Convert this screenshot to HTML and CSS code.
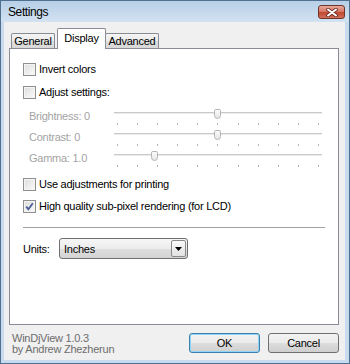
FILE: index.html
```html
<html>
  <head>
    <link rel="stylesheet" href="styles.css">
  </head>
  <body>
    <div class="window">
      <div class="titlebar">
        <span class="title">Settings</span>
        <button class="close-btn">
          <svg width="12" height="9" viewBox="0 0 12 9">
            <path d="M2 1.5 L10 7.5 M10 1.5 L2 7.5" stroke="#6b2a22" stroke-width="3.6" stroke-linecap="round"/>
            <path d="M2 1.5 L10 7.5 M10 1.5 L2 7.5" stroke="#fff" stroke-width="2" stroke-linecap="round"/>
          </svg>
        </button>
      </div>
      <div class="client">
        <div class="tabs">
          <div class="tab tab-general">General</div>
          <div class="tab tab-display active">Display</div>
          <div class="tab tab-advanced">Advanced</div>
        </div>
        <div class="panel">
          <div class="check"><span class="box"></span>Invert colors</div>
          <div class="check check-adjust"><span class="box"></span>Adjust settings:</div>

          <div class="slider-row first">
            <div class="slider-label">Brightness: 0</div>
            <div class="slider">
              <div class="track"></div>
              <div class="ticks"><i></i><i></i><i></i><i></i><i></i><i></i><i></i><i></i><i></i><i></i><i></i></div>
              <div class="thumb" style="left: 100px"></div>
            </div>
          </div>
          <div class="slider-row">
            <div class="slider-label">Contrast: 0</div>
            <div class="slider">
              <div class="track"></div>
              <div class="ticks"><i></i><i></i><i></i><i></i><i></i><i></i><i></i><i></i><i></i><i></i><i></i></div>
              <div class="thumb" style="left: 100px"></div>
            </div>
          </div>
          <div class="slider-row">
            <div class="slider-label">Gamma: 1.0</div>
            <div class="slider">
              <div class="track"></div>
              <div class="ticks"><i></i><i></i><i></i><i></i><i></i><i></i><i></i><i></i><i></i><i></i><i></i></div>
              <div class="thumb" style="left: 37px"></div>
            </div>
          </div>

          <div class="check check-print"><span class="box"></span>Use adjustments for printing</div>
          <div class="check check-lcd">
            <span class="box checked">
              <svg width="9" height="9" viewBox="0 0 9 9">
                <path d="M1.2 4.6 L3.4 7.2 L7.8 1.2" fill="none" stroke="#4b5d96" stroke-width="1.8"/>
              </svg>
            </span>High quality sub-pixel rendering (for LCD)
          </div>

          <div class="separator"></div>

          <div class="units-row">
            <span class="units-label">Units:</span>
            <div class="combo">
              <span>Inches</span>
              <span class="combo-arrow">
                <svg width="7" height="4" viewBox="0 0 7 4"><path d="M0 0 H7 L3.5 4 Z" fill="#000"/></svg>
              </span>
            </div>
          </div>
        </div>
        <div class="footer">
          <div class="about">WinDjView 1.0.3<br>by Andrew Zhezherun</div>
          <div class="buttons">
            <button class="btn default">OK</button>
            <button class="btn">Cancel</button>
          </div>
        </div>
      </div>
    </div>
  </body>
</html>
```

FILE: styles.css
```css
body{
  margin: 0;
  font-family: "Liberation Sans", Arial, sans-serif;
  font-size: 11px;
  letter-spacing: -0.25px;
  color: #000;
}
.window{
  width: 350px;
  height: 364px;
  box-sizing: border-box;
  border: 1px solid #50708f;
  background: #c8dbee;
  padding: 0 4px 3px 3px;
  display: flex;
  flex-direction: column;
}
.titlebar{
  height: 21px;
  margin: 0 -4px 0 -3px;
  padding: 0 4px 0 7px;
  background: linear-gradient(#b7cfe7, #d2e2f2);
  display: flex;
  align-items: flex-start;
  justify-content: space-between;
}
.title{
  font-size: 12px;
  letter-spacing: -0.4px;
  line-height: 22px;
  color: #000;
}
.close-btn{
  margin-top: 4px;
  width: 27px;
  height: 14px;
  padding: 0;
  border: 1px solid #70332b;
  border-radius: 3px;
  background: linear-gradient(#e9a99b, #d57a68 45%, #c3472f 55%, #d0705a);
  display: flex;
  align-items: center;
  justify-content: center;
}
.client{
  flex: 1;
  background: #f0f0f0;
  padding: 7px 6px 0 5px;
  display: flex;
  flex-direction: column;
}
.tabs{
  height: 19px;
  padding-left: 2px;
  display: flex;
  align-items: flex-end;
}
.tab{
  height: 15px;
  box-sizing: border-box;
  border: 1px solid #898c95;
  border-bottom: none;
  border-radius: 2px 2px 0 0;
  background: linear-gradient(#f4f4f4, #ebebeb 50%, #dedede 51%, #d8d8d8);
  text-align: center;
  line-height: 15px;
}
.tab-general{
  width: 44px;
}
.tab-display{
  width: 49px;
  margin-left: 2px;
}
.tab-advanced{
  width: 54px;
  margin-left: -1px;
}
.tab.active{
  height: 21px;
  margin-bottom: -1px;
  background: #fff;
  line-height: 19px;
  position: relative;
  z-index: 1;
}
.panel{
  width: 330px;
  height: 277px;
  box-sizing: border-box;
  border: 1px solid #898c95;
  background: #fff;
  padding: 14px 13px 0 13px;
}
.check{
  height: 13px;
  display: flex;
  align-items: center;
  line-height: 13px;
}
.check-adjust{
  margin-top: 10px;
}
.check-print{
  margin-top: 8px;
}
.check-lcd{
  margin-top: 9px;
}
.box{
  width: 13px;
  height: 13px;
  box-sizing: border-box;
  border: 1px solid #8f8f8f;
  background: linear-gradient(135deg, #dcdcdc, #fbfbfb);
  box-shadow: inset 0 0 0 1px #f4f4f4;
  margin-right: 3px;
  display: flex;
  align-items: center;
  justify-content: center;
}
.slider-row{
  height: 21px;
  display: flex;
  padding-left: 6px;
}
.slider-row.first{
  margin-top: 8px;
}
.slider-label{
  width: 85px;
  padding-top: 3px;
  line-height: 13px;
  color: #a3a3a3;
}
.slider{
  width: 208px;
  position: relative;
}
.track{
  margin-top: 5px;
  height: 1px;
  background: #c9c9c9;
  border-bottom: 1px solid #ececec;
}
.ticks{
  margin-top: 9px;
  padding: 0 3px;
  display: flex;
  justify-content: space-between;
}
.ticks i{
  width: 1px;
  height: 2px;
  background: #b5b5b5;
}
.thumb{
  position: absolute;
  top: 2px;
  width: 7px;
  height: 10px;
  box-sizing: border-box;
  border: 1px solid #b4b4b4;
  border-radius: 2px 2px 4px 4px;
  background: linear-gradient(#fbfbfb, #e6e6e6);
}
.separator{
  margin-top: 14px;
  height: 1px;
  background: #a0a0a0;
}
.units-row{
  margin-top: 10px;
  display: flex;
  align-items: center;
}
.units-label{
  width: 36px;
}
.combo{
  width: 129px;
  height: 21px;
  box-sizing: border-box;
  border: 1px solid #707070;
  border-radius: 3px;
  background: linear-gradient(#f6f6f6, #ececec 50%, #dfdfdf 51%, #d3d3d3);
  padding: 0 1px 0 4px;
  display: flex;
  align-items: center;
  justify-content: space-between;
}
.combo-arrow{
  width: 15px;
  height: 17px;
  box-sizing: border-box;
  border: 1px solid #8a8a8a;
  border-radius: 2px;
  background: linear-gradient(#fafafa, #e2e2e2);
  display: flex;
  align-items: center;
  justify-content: center;
}
.footer{
  margin-top: 8px;
  display: flex;
  justify-content: space-between;
  align-items: flex-start;
}
.about{
  margin-left: 3px;
  line-height: 11px;
  color: #6d6d6d;
}
.buttons{
  display: flex;
  gap: 8px;
}
.btn{
  width: 71px;
  height: 20px;
  padding: 0;
  border: 1px solid #707070;
  border-radius: 3px;
  background: linear-gradient(#f2f2f2, #ebebeb 50%, #dddddd 51%, #cfcfcf);
  font-family: "Liberation Sans", Arial, sans-serif;
  font-size: 11px;
  letter-spacing: -0.25px;
  color: #000;
}
.btn.default{
  border-color: #3c7fb1;
  box-shadow: inset 0 0 0 1px #8fd4f5;
}
```
